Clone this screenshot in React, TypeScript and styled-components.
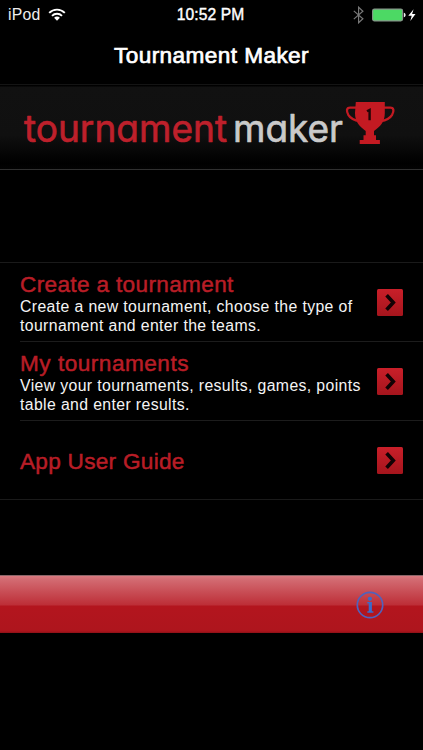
import React from "react";
import styled, { createGlobalStyle } from "styled-components";

const GlobalStyle = createGlobalStyle`
  *, *::before, *::after { box-sizing: border-box; }
  body { margin: 0; background: #000; font-family: "Liberation Sans", Arial, sans-serif; }
`;

const Screen = styled.div`
  width: 423px;
  height: 750px;
  overflow: hidden;
  display: flex;
  flex-direction: column;
  background: #000;
  color: #fff;
`;

const StatusBar = styled.header`
  height: 28px;
  flex: none;
  display: grid;
  grid-template-columns: 1fr auto 1fr;
  align-items: center;
  padding: 0 6px 0 4px;
`;

const StatusGroup = styled.div<{ $end?: boolean }>`
  display: flex;
  align-items: center;
  height: 28px;
  gap: ${(p) => (p.$end ? 7 : 8)}px;
  padding-left: ${(p) => (p.$end ? 0 : 4)}px;
  justify-content: ${(p) => (p.$end ? "flex-end" : "flex-start")};
`;

const Carrier = styled.span`
  font-size: 15.8px;
  line-height: 28px;
  letter-spacing: 0.2px;
  color: #eee;
`;

const Clock = styled.time`
  font-size: 15.6px;
  line-height: 29px;
  letter-spacing: 0.1px;
  -webkit-text-stroke: 0.4px #fff;
`;

const TitleBar = styled.div`
  height: 56px;
  flex: none;
  text-align: center;
`;

const Title = styled.h1`
  margin: 0;
  font-size: 22.6px;
  line-height: 56px;
  font-weight: 400;
  letter-spacing: 0.42px;
  -webkit-text-stroke: 0.7px #fff;
`;

const Banner = styled.div`
  height: 86px;
  flex: none;
  border-top: 1px solid #141414;
  border-bottom: 1px solid #303030;
  background: linear-gradient(#000 0, #000 1px, #111 2px, #101010 50px, #000 78px, #030303 100%);
`;

const Menu = styled.ul`
  list-style: none;
  margin: 92px 0 0;
  padding: 0;
  flex: none;
  border-top: 1px solid #1a1a1a;
  border-bottom: 1px solid #1a1a1a;
`;

const MenuItem = styled.li`
  height: 78px;
  margin-left: 20px;
  padding-right: 20px;
  display: flex;
  align-items: center;
  justify-content: space-between;
  & + & {
    height: 79px;
    border-top: 1px solid #1c1c1c;
  }
`;

const ItemText = styled.div`
  white-space: nowrap;
  padding-top: 3px;
`;

const ItemTitle = styled.h2<{ $spacing: number }>`
  margin: 0;
  font-size: 22.6px;
  line-height: 26px;
  font-weight: 400;
  color: #b81d26;
  letter-spacing: ${(p) => p.$spacing}px;
  -webkit-text-stroke: 0.5px #b81d26;
`;

const Description = styled.p`
  margin: 0;
  font-size: 15.8px;
  line-height: 18.6px;
  color: #f4f4f4;
  letter-spacing: 0.38px;
`;

const ArrowButton = styled.button`
  width: 26px;
  height: 27px;
  flex: none;
  padding: 0;
  border: 0;
  border-radius: 1.5px;
  background: linear-gradient(#c91f29, #a5151d);
  display: grid;
  place-items: center;
`;

const Toolbar = styled.footer`
  height: 58px;
  flex: none;
  margin-top: 75px;
  padding-right: 39px;
  display: flex;
  align-items: center;
  justify-content: flex-end;
  border-top: 1px solid #8a6568;
  background: linear-gradient(#d97a80 0, #d36c73 3px, #bd2e37 29px, #b3151e 30px, #ae151d 55px, #8c1017 100%);
`;

const InfoButton = styled.button`
  width: 28px;
  height: 28px;
  padding: 0;
  border: 0;
  background: none;
`;

const Wordmark = styled.text`
  font-family: Inter, sans-serif;
  font-size: 38.5px;
  font-feature-settings: "cv11" 1;
  stroke-width: 0.7px;
  stroke-linejoin: round;
`;

const WifiIcon = () => (
  <svg width="18" height="13" viewBox="0 0 18 13" fill="none" stroke="#fff" strokeWidth="1.9">
    <path d="M1.2 4.9C5.5.5 12.5.5 16.8 4.9" />
    <path d="M4 7.8c2.8-2.8 7.2-2.8 10 0" />
    <path d="M6.1 9.8c1.6-1.6 4.2-1.6 5.8 0L9 12.7z" fill="#fff" stroke="none" />
  </svg>
);

const BluetoothIcon = () => (
  <svg width="11" height="18" viewBox="0 0 11 18" fill="none" stroke="#777" strokeWidth="1.2">
    <path d="M.8 4.9 9.9 12.8 5.6 16.8V1.2l4.3 4L.8 13.1" />
  </svg>
);

const BatteryIcon = () => (
  <svg width="46" height="16" viewBox="0 0 46 16">
    <rect x="1.6" y="2.1" width="30" height="11.8" rx="1.8" fill="#4cd964" stroke="#86978a" strokeWidth="1.1" />
    <path d="M32.8 5.8c2.4.2 2.4 4.3 0 4.5z" fill="#eee" />
    <path d="M42.6 2.2 37.3 8.8h3.4l-1.4 5.2 5.2-7h-3.4z" fill="#fff" />
  </svg>
);

const Logo = () => (
  <svg width="423" height="84" viewBox="0 85 423 84">
    <Wordmark x="24" y="142.2" textLength="203" lengthAdjust="spacingAndGlyphs" fill="#be202b" stroke="#be202b">
      tournament
    </Wordmark>
    <Wordmark x="233" y="142.2" textLength="110" lengthAdjust="spacingAndGlyphs" fill="#cacaca" stroke="#cacaca">
      maker
    </Wordmark>
    <g fill="#c41a22">
      <path d="M355.8 102h29v11c0 9-4.6 13.6-10.8 18v4.2h2v4.9h3.9v4h-20.2v-4h3.8v-4.9h2.2v-4.2c-6-4.4-10.7-9-10.7-18z" />
      <path
        d="M357 107.6h-6.8c-4.2 0-3.7 4-1.9 7.2 2.2 3.6 6 5.6 11.3 6.2M383.8 107.6h6.4c4.2 0 3.7 4 1.9 7.2-2.2 3.6-6 5.6-11.3 6.2"
        fill="none"
        stroke="#c41a22"
        strokeWidth="2.3"
      />
    </g>
    <path d="m367 111.3 2.6-1.4v10.4" fill="none" stroke="#210507" strokeWidth="2.4" />
  </svg>
);

const Chevron = () => (
  <svg width="26" height="27" viewBox="0 0 26 27" fill="none" stroke="#120204" strokeWidth="3.6">
    <path d="m9.6 6.2 6.7 7.3-6.7 7.3" />
  </svg>
);

const InfoIcon = () => (
  <svg width="28" height="28" viewBox="0 0 28 28">
    <circle cx="14" cy="14" r="12.7" fill="none" stroke="#4f62bd" strokeWidth="1.7" />
    <g fill="#3a6bca">
      <circle cx="13.9" cy="7.8" r="2.1" />
      <path d="M11.3 11h4.6v9.3h1.5v1.4h-6.1v-1.4h1.4v-7.9h-1.4z" />
    </g>
  </svg>
);

const items = [
  {
    title: "Create a tournament",
    spacing: 0.34,
    lines: ["Create a new tournament, choose the type of", "tournament and enter the teams."],
  },
  {
    title: "My tournaments",
    spacing: 0.5,
    lines: ["View your tournaments, results, games, points", "table and enter results."],
  },
  { title: "App User Guide", spacing: 0.28, lines: [] },
];

export default function App() {
  return (
    <>
      <GlobalStyle />
      <Screen>
        <StatusBar>
          <StatusGroup>
            <Carrier>iPod</Carrier>
            <WifiIcon />
          </StatusGroup>
          <Clock>10:52 PM</Clock>
          <StatusGroup $end>
            <BluetoothIcon />
            <BatteryIcon />
          </StatusGroup>
        </StatusBar>
        <TitleBar>
          <Title>Tournament Maker</Title>
        </TitleBar>
        <Banner>
          <Logo />
        </Banner>
        <Menu>
          {items.map((item) => (
            <MenuItem key={item.title}>
              <ItemText>
                <ItemTitle $spacing={item.spacing}>{item.title}</ItemTitle>
                {item.lines.map((line) => (
                  <Description key={line}>{line}</Description>
                ))}
              </ItemText>
              <ArrowButton aria-label={item.title}>
                <Chevron />
              </ArrowButton>
            </MenuItem>
          ))}
        </Menu>
        <Toolbar>
          <InfoButton aria-label="Info">
            <InfoIcon />
          </InfoButton>
        </Toolbar>
      </Screen>
    </>
  );
}
